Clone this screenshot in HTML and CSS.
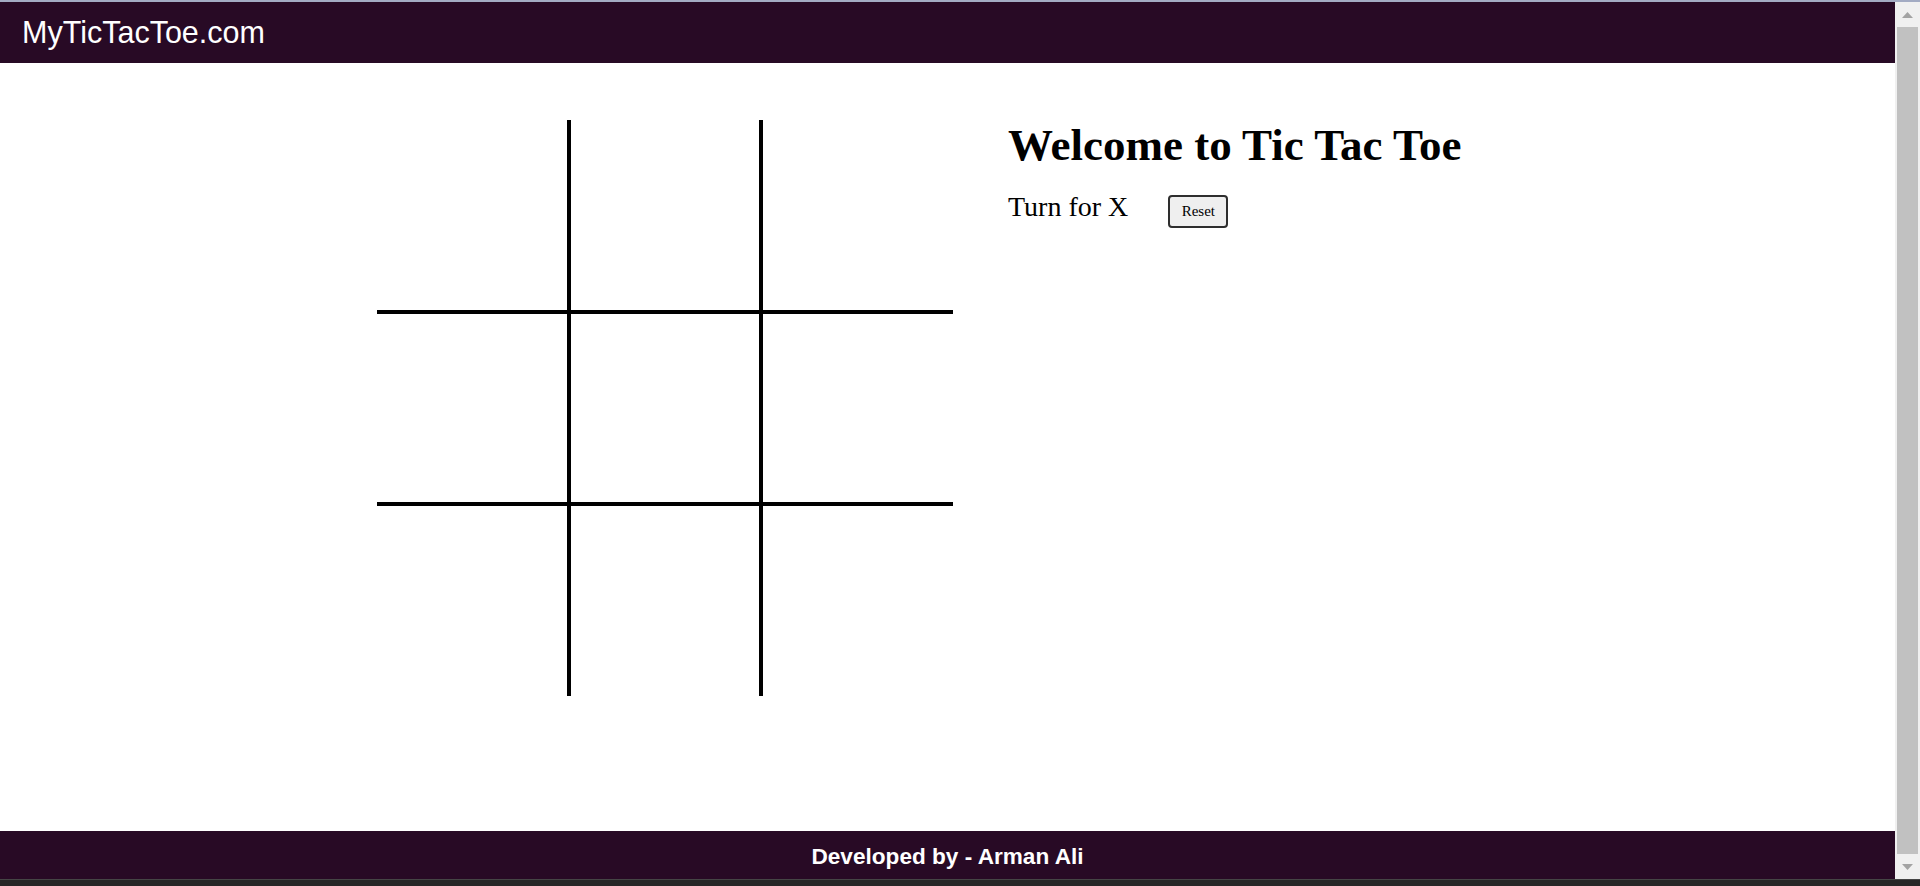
FILE: index.html
```html
<!DOCTYPE html>
<html lang="en">
<head>
<meta charset="utf-8">
<title>MyTicTacToe.com</title>
<link rel="stylesheet" href="styles.css">
</head>
<body>
<div class="screen">
  <div class="topline"></div>
  <div class="window">
    <div class="page">
      <nav class="navbar"><span class="brand">MyTicTacToe.com</span></nav>
      <main class="main">
        <div class="board">
          <div class="box b1"></div>
          <div class="box b2"></div>
          <div class="box b3"></div>
          <div class="box b4"></div>
          <div class="box b5"></div>
          <div class="box b6"></div>
          <div class="box b7"></div>
          <div class="box b8"></div>
          <div class="box b9"></div>
        </div>
        <div class="info">
          <h1 class="title">Welcome to Tic Tac Toe</h1>
          <div class="turn-row">
            <span class="turn">Turn for X</span>
            <button class="reset">Reset</button>
          </div>
        </div>
      </main>
      <footer class="footer">Developed by - Arman Ali</footer>
    </div>
    <div class="scrollbar">
      <div class="sb-btn">
        <svg width="11" height="6" viewBox="0 0 11 6"><polygon points="5.5,0 11,6 0,6" fill="#a3a3a3"/></svg>
      </div>
      <div class="sb-track"><div class="sb-thumb"></div></div>
      <div class="sb-btn">
        <svg width="11" height="6" viewBox="0 0 11 6"><polygon points="0,0 11,0 5.5,6" fill="#a3a3a3"/></svg>
      </div>
    </div>
  </div>
  <div class="taskbar"></div>
</div>
</body>
</html>
```
FILE: styles.css
```css
html, body {
  margin: 0;
  padding: 0;
  height: 886px;
  overflow: hidden;
  background: #ffffff;
}

.screen {
  display: flex;
  flex-direction: column;
  height: 886px;
}

.topline {
  height: 2px;
  background: #a3abc3;
  flex: none;
}

.window {
  flex: 1;
  display: flex;
  min-height: 0;
}

.page {
  flex: 1;
  display: flex;
  flex-direction: column;
  min-width: 0;
}

.navbar {
  height: 61px;
  flex: none;
  background: #280a25;
  display: flex;
  align-items: center;
  padding-left: 22px;
}

.brand {
  font-family: "Liberation Sans", Arial, sans-serif;
  font-size: 30.5px;
  color: #ffffff;
}

.main {
  flex: 1;
  display: flex;
  justify-content: center;
  align-items: flex-start;
  gap: 55px;
  padding-top: 56px;
}

.board {
  display: grid;
  grid-template-columns: repeat(3, 192px);
  grid-template-rows: repeat(3, 192px);
  margin-top: 1px;
}

.box {
  box-sizing: border-box;
  border: 2px solid #000000;
}

.b1, .b2, .b3 { border-top: 0; }
.b7, .b8, .b9 { border-bottom: 0; }
.b1, .b4, .b7 { border-left: 0; }
.b3, .b6, .b9 { border-right: 0; }

.info {
  width: 510px;
  font-family: "Liberation Serif", "Times New Roman", serif;
  color: #000000;
}

.title {
  margin: 0;
  font-size: 45px;
  font-weight: bold;
  line-height: normal;
}

.turn-row {
  display: flex;
  align-items: baseline;
  gap: 40px;
  margin-top: 20px;
}

.turn {
  font-size: 28px;
}

.reset {
  box-sizing: border-box;
  width: 60px;
  height: 33px;
  padding: 0;
  font-family: "Liberation Serif", "Times New Roman", serif;
  font-size: 15px;
  color: #000000;
  background: #efefef;
  border: 2px solid #2e2e2e;
  border-radius: 4px;
}

.footer {
  height: 48px;
  flex: none;
  box-sizing: border-box;
  background: #280a25;
  color: #ffffff;
  font-family: "Liberation Sans", Arial, sans-serif;
  font-weight: bold;
  font-size: 22.6px;
  text-align: center;
  padding-top: 13px;
  line-height: 26px;
}

.scrollbar {
  width: 25px;
  flex: none;
  background: #f0f0f0;
  display: flex;
  flex-direction: column;
}

.sb-btn {
  height: 25px;
  display: flex;
  align-items: center;
  justify-content: center;
  flex: none;
}

.sb-track {
  flex: 1;
  display: flex;
  justify-content: center;
}

.sb-thumb {
  width: 21px;
  height: 100%;
  background: #c1c1c1;
}

.taskbar {
  height: 7px;
  flex: none;
  box-sizing: border-box;
  border-top: 1px solid #454545;
  background: #272727;
}
```
